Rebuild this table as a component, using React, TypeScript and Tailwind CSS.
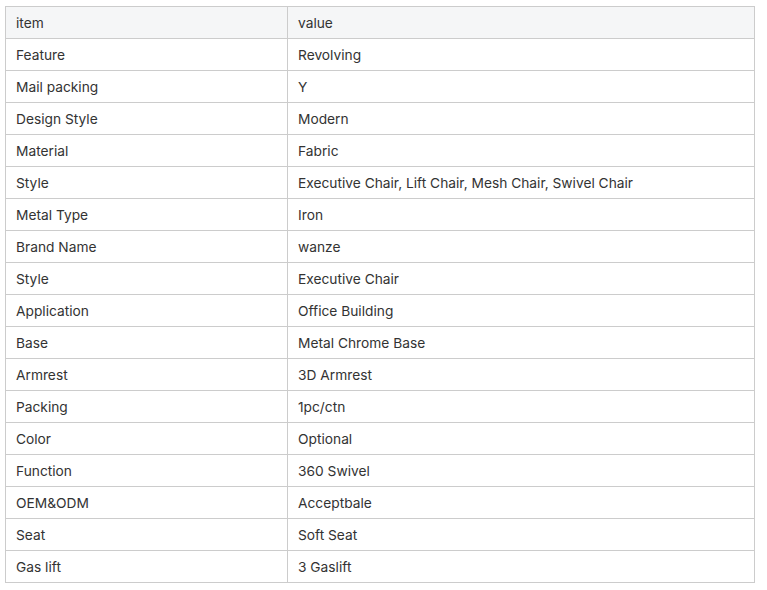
const rows: [string, string][] = [
  ['Feature', 'Revolving'],
  ['Mail packing', 'Y'],
  ['Design Style', 'Modern'],
  ['Material', 'Fabric'],
  ['Style', 'Executive Chair, Lift Chair, Mesh Chair, Swivel Chair'],
  ['Metal Type', 'Iron'],
  ['Brand Name', 'wanze'],
  ['Style', 'Executive Chair'],
  ['Application', 'Office Building'],
  ['Base', 'Metal Chrome Base'],
  ['Armrest', '3D Armrest'],
  ['Packing', '1pc/ctn'],
  ['Color', 'Optional'],
  ['Function', '360 Swivel'],
  ['OEM&ODM', 'Acceptbale'],
  ['Seat', 'Soft Seat'],
  ['Gas lift', '3 Gaslift'],
]

export default function App() {
  return (
    <div className="w-[767px] h-[590px] bg-white pt-[6px] pl-[5px] font-['Inter',sans-serif] text-[13.75px] text-[#333]">
      <table className="w-[750px] border-collapse table-fixed">
        <colgroup>
          <col className="w-[282px]" />
          <col />
        </colgroup>
        <thead>
          <tr className="h-[32px] bg-[#f5f6f7]">
            <td className="border border-[#ccc] px-[10px] pt-[2px] font-normal">item</td>
            <td className="border border-[#ccc] px-[10px] pt-[2px] font-normal">value</td>
          </tr>
        </thead>
        <tbody>
          {rows.map(([k, v], i) => (
            <tr key={i} className="h-[32px]">
              <td className="border border-[#ccc] px-[10px] pt-[2px]">{k}</td>
              <td className="border border-[#ccc] px-[10px] pt-[2px]">{v}</td>
            </tr>
          ))}
        </tbody>
      </table>
    </div>
  )
}
